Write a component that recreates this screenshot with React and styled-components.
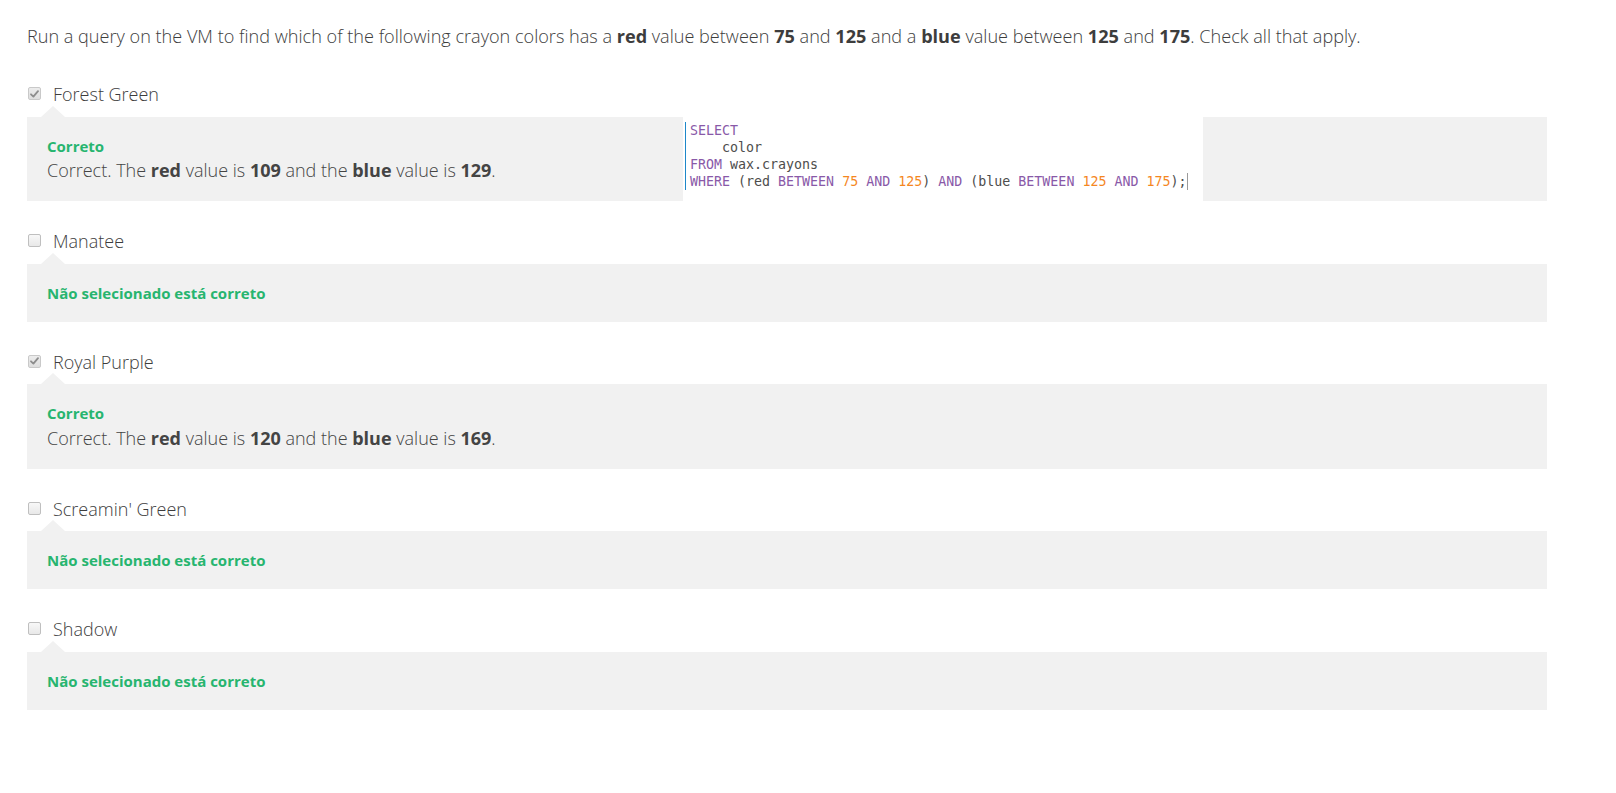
import React from "react";
import styled, { createGlobalStyle } from "styled-components";

const Global = createGlobalStyle`
  body {
    margin: 0;
    background: #fff;
    font-family: "Open Sans", "Liberation Sans", sans-serif;
    color: #444;
  }
`;

const Page = styled.div`
  width: 1520px;
  padding: 23px 0 80px 27px;
`;

const Prompt = styled.p`
  margin: 0 0 32px;
  font-size: 18.1px;
  line-height: 26px;
  font-weight: 300;
  color: #3d3d3d;

  strong {
    font-weight: 700;
  }
`;

const Option = styled.div`
  display: flex;
  flex-direction: column;
  margin-bottom: 27px;
`;

const LabelRow = styled.label`
  display: flex;
  align-items: center;
  gap: 12px;
  height: 26px;
  font-size: 18px;
  font-weight: 300;
  color: #3d3d3d;
`;

const Box = styled.span`
  box-sizing: border-box;
  width: 13px;
  height: 13px;
  margin: -1px 0 0 1px;
  border: 1px solid ${(p) => (p.$checked ? "#c9c9c9" : "#bfbfbf")};
  border-radius: 2px;
  background: ${(p) =>
    p.$checked
      ? "linear-gradient(#ececec, #dedede)"
      : "linear-gradient(#f8f8f8, #e8e8e8)"};
  display: flex;
  align-items: center;
  justify-content: center;
`;

const Feedback = styled.div`
  position: relative;
  display: flex;
  margin-top: 9.5px;
  background: #f1f1f1;

  &::before {
    content: "";
    position: absolute;
    left: 14px;
    top: -11px;
    border-left: 12.5px solid transparent;
    border-right: 12.5px solid transparent;
    border-bottom: 11px solid #f1f1f1;
  }
`;

const FeedbackText = styled.div`
  flex: ${(p) => (p.$narrow ? "0 0 656px" : "1 1 auto")};
  box-sizing: border-box;
  padding: 19px 20px;
`;

const Verdict = styled.div`
  font-size: 15px;
  line-height: 20px;
  font-weight: 700;
  color: #27b56f;
`;

const Explanation = styled.div`
  margin-top: 2.5px;
  font-size: 18px;
  line-height: 24px;
  font-weight: 300;
  color: #444;

  strong {
    font-weight: 700;
  }
`;

const CodeCell = styled.div`
  flex: 0 0 520px;
  box-sizing: border-box;
  background: #fff;
  padding: 5.5px 0 0 1.5px;
`;

const Code = styled.pre`
  margin: 0;
  padding-left: 4.5px;
  border-left: 1px solid #1e88c9;
  font-family: "DejaVu Sans Mono", "Liberation Mono", monospace;
  font-size: 13.3px;
  line-height: 17px;
  color: #4d4d4c;
`;

const Kw = styled.span`
  color: #8959a8;
`;

const Num = styled.span`
  color: #f5871f;
`;

const Cursor = styled.span`
  display: inline-block;
  width: 0;
  height: 17px;
  vertical-align: top;
  border-left: 1.5px solid #9a9a9a;
`;

function Check({ checked }) {
  return (
    <Box $checked={checked}>
      {checked && (
        <svg width="9" height="8" viewBox="0 0 9 8">
          <path
            d="M1 4.3 L3.4 6.6 L8 1.2"
            fill="none"
            stroke="#8d8d8d"
            strokeWidth="1.8"
            strokeLinecap="round"
            strokeLinejoin="round"
          />
        </svg>
      )}
    </Box>
  );
}

function Query() {
  return (
    <CodeCell>
      <Code>
        <Kw>SELECT</Kw>
        {"\n    color\n"}
        <Kw>FROM</Kw>
        {" wax.crayons\n"}
        <Kw>WHERE</Kw> (red <Kw>BETWEEN</Kw> <Num>75</Num> <Kw>AND</Kw>{" "}
        <Num>125</Num>) <Kw>AND</Kw> (blue <Kw>BETWEEN</Kw> <Num>125</Num>{" "}
        <Kw>AND</Kw> <Num>175</Num>);
        <Cursor />
      </Code>
    </CodeCell>
  );
}

const options = [
  { name: "Forest Green", checked: true, red: 109, blue: 129, code: true },
  { name: "Manatee", checked: false },
  { name: "Royal Purple", checked: true, red: 120, blue: 169 },
  { name: "Screamin' Green", checked: false },
  { name: "Shadow", checked: false },
];

export default function App() {
  return (
    <>
      <Global />
      <Page>
        <Prompt>
          Run a query on the VM to find which of the following crayon colors has a{" "}
          <strong>red</strong> value between <strong>75</strong> and{" "}
          <strong>125</strong> and a <strong>blue</strong> value between{" "}
          <strong>125</strong> and <strong>175</strong>. Check all that apply.
        </Prompt>
        {options.map((o) => (
          <Option key={o.name}>
            <LabelRow>
              <Check checked={o.checked} />
              {o.name}
            </LabelRow>
            <Feedback>
              <FeedbackText $narrow={o.code}>
                {o.checked ? (
                  <>
                    <Verdict>Correto</Verdict>
                    <Explanation>
                      Correct. The <strong>red</strong> value is{" "}
                      <strong>{o.red}</strong> and the <strong>blue</strong> value is{" "}
                      <strong>{o.blue}</strong>.
                    </Explanation>
                  </>
                ) : (
                  <Verdict>Não selecionado está correto</Verdict>
                )}
              </FeedbackText>
              {o.code && <Query />}
            </Feedback>
          </Option>
        ))}
      </Page>
    </>
  );
}
